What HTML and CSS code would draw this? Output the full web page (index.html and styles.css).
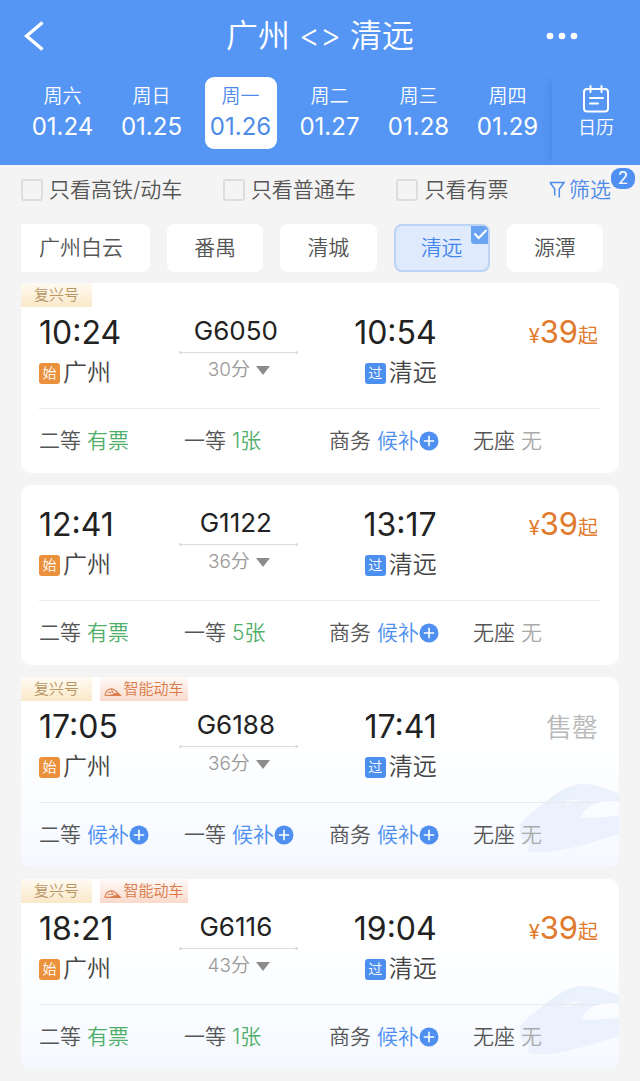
FILE: index.html
```html
<!DOCTYPE html>
<html lang="zh-CN">
<head>
<meta charset="utf-8">
<meta name="viewport" content="width=device-width, initial-scale=1">
<title>广州 - 清远</title>
<link rel="stylesheet" href="styles.css">
</head>
<body>
<svg class="defs" aria-hidden="true">
  <symbol id="plus" viewBox="0 0 20 20"><circle cx="10" cy="10" r="9.5" fill="#4e8ff0"/><path d="M10 4.8v10.4M4.8 10h10.4" stroke="#fff" stroke-width="1.6"/></symbol>
  <symbol id="train" viewBox="0 0 18 10"><path d="M1 8.300C1.500 4.500 4 2 7.500 1.800 10 1.800 13 5 16.500 8.300z" fill="none" stroke="currentColor" stroke-width="1.100"/><path d="M3.500 5.300h5.200L7.500 2M8.700 5.300l2.300 1.700" fill="none" stroke="currentColor" stroke-width=".9"/><path d="M4 8.300C8 8 10 6.500 13 5.800l4.300 3H1z" fill="currentColor"/></symbol>
  <symbol id="watermark" viewBox="0 0 102 70">
    <path d="M3 40C10 32 17 27 26 20 37 11 50 0 66 0c13 0 25 5 37 10v8c-8-1-13-1-20 0-9 2-16 9-20 15 13 2 27 0 40-2v19C88 54 68 61 53 64c-10 2-19 5-27 4-7 0-13 0-15-2l1-6C8 58 4 55 3 50z" fill="#ebf2fd"/>
    <path d="M49 18c5-2 9-3 13-2-4 3-8 4-13 5z" fill="#f6f9fe"/>
    <path d="M26 20C37 11 50 3 62 4c-8 3-13 9-21 14-5 2-10 3-15 2z" fill="#e5eefc" opacity=".5"/>
  </symbol>
</svg>
<header class="header">
  <div class="nav">
    <button class="nav-btn" aria-label="返回"><svg width="20" height="30" viewBox="0 0 20 30"><path d="M18.500 1.500 2.500 15l16 13.500" fill="none" stroke="#fff" stroke-width="3.400"/></svg></button>
    <h1 class="title">广州 &lt;&gt; 清远</h1>
    <button class="nav-btn nav-more" aria-label="更多"><svg width="32" height="8" viewBox="0 0 32 8" fill="#fff"><circle cx="4" cy="4" r="3.300"/><circle cx="16" cy="4" r="3.300"/><circle cx="28" cy="4" r="3.300"/></svg></button>
  </div>
  <div class="dates">
    <div class="days">
      <button class="day"><span>周六</span><b>01.24</b></button>
      <button class="day"><span>周日</span><b>01.25</b></button>
      <button class="day day-on" aria-pressed="true"><span>周一</span><b>01.26</b></button>
      <button class="day"><span>周二</span><b>01.27</b></button>
      <button class="day"><span>周三</span><b>01.28</b></button>
      <button class="day"><span>周四</span><b>01.29</b></button>
    </div>
    <button class="calendar"><svg width="28" height="28" viewBox="0 0 28 28" fill="none" stroke="#fff" stroke-width="2"><rect x="2" y="4" width="24" height="22.500" rx="3"/><path d="M8.500 1v6M19.500 1v6M8 13h13M8 18.500h8" stroke-linecap="round"/></svg><span>日历</span></button>
  </div>
</header>
<main>
  <form class="filters">
    <label class="check"><input type="checkbox">只看高铁/动车</label>
    <label class="check"><input type="checkbox">只看普通车</label>
    <label class="check"><input type="checkbox">只看有票</label>
    <button type="button" class="filter"><svg width="16" height="18" viewBox="0 0 16 18"><path d="M1 1.500h14L10.300 8v8.500M1 1.500 5.700 8v6.500" fill="none" stroke="currentColor" stroke-width="1.500"/></svg>筛选<span class="count">2</span></button>
  </form>
  <div class="chips">
    <button class="chip chip-edge">广州白云</button>
    <button class="chip">番禺</button>
    <button class="chip">清城</button>
    <button class="chip chip-on" aria-pressed="true">清远<svg class="tick" width="17" height="18" viewBox="0 0 17 18"><path d="M0 0h12q5 0 5 5v13H3q-3 0-3-3z" fill="#6ba3f3"/><path d="m3.500 7.500 4.200 4.500L15.500 4" fill="none" stroke="#fff" stroke-width="2"/></svg></button>
    <button class="chip">源潭</button>
  </div>
  <div class="list">
    <article class="card">
      <div class="tags"><span class="tag">复兴号</span></div>
      <div class="trip">
        <div class="stop"><time class="time">10:24</time><div class="station"><i class="mark mark-start">始</i>广州</div></div>
        <div class="mid"><div class="no">G6050</div><div class="rail"></div><button class="dur">30分<i class="caret"></i></button></div>
        <div class="stop stop-end"><time class="time">10:54</time><div class="station"><i class="mark">过</i>清远</div></div>
        <div class="price"><small>¥</small>39<em>起</em></div>
      </div>
      <ul class="seats">
        <li>二等<span class="yes">有票</span></li><li>一等<span class="yes">1张</span></li>
        <li>商务<a class="wait" href="#">候补<svg><use href="#plus"/></svg></a></li><li>无座<span class="none">无</span></li>
      </ul>
    </article>
    <article class="card card-plain">
      <div class="trip">
        <div class="stop"><time class="time">12:41</time><div class="station"><i class="mark mark-start">始</i>广州</div></div>
        <div class="mid"><div class="no">G1122</div><div class="rail"></div><button class="dur">36分<i class="caret"></i></button></div>
        <div class="stop stop-end"><time class="time">13:17</time><div class="station"><i class="mark">过</i>清远</div></div>
        <div class="price"><small>¥</small>39<em>起</em></div>
      </div>
      <ul class="seats">
        <li>二等<span class="yes">有票</span></li><li>一等<span class="yes">5张</span></li>
        <li>商务<a class="wait" href="#">候补<svg><use href="#plus"/></svg></a></li><li>无座<span class="none">无</span></li>
      </ul>
    </article>
    <article class="card card-smart">
      <svg class="watermark" aria-hidden="true"><use href="#watermark"/></svg>
      <div class="tags"><span class="tag">复兴号</span><span class="tag tag-smart"><svg><use href="#train"/></svg>智能动车</span></div>
      <div class="trip">
        <div class="stop"><time class="time">17:05</time><div class="station"><i class="mark mark-start">始</i>广州</div></div>
        <div class="mid"><div class="no">G6188</div><div class="rail"></div><button class="dur">36分<i class="caret"></i></button></div>
        <div class="stop stop-end"><time class="time">17:41</time><div class="station"><i class="mark">过</i>清远</div></div>
        <div class="price sold">售罄</div>
      </div>
      <ul class="seats">
        <li>二等<a class="wait" href="#">候补<svg><use href="#plus"/></svg></a></li><li>一等<a class="wait" href="#">候补<svg><use href="#plus"/></svg></a></li>
        <li>商务<a class="wait" href="#">候补<svg><use href="#plus"/></svg></a></li><li>无座<span class="none">无</span></li>
      </ul>
    </article>
    <article class="card card-smart">
      <svg class="watermark" aria-hidden="true"><use href="#watermark"/></svg>
      <div class="tags"><span class="tag">复兴号</span><span class="tag tag-smart"><svg><use href="#train"/></svg>智能动车</span></div>
      <div class="trip">
        <div class="stop"><time class="time">18:21</time><div class="station"><i class="mark mark-start">始</i>广州</div></div>
        <div class="mid"><div class="no">G6116</div><div class="rail"></div><button class="dur">43分<i class="caret"></i></button></div>
        <div class="stop stop-end"><time class="time">19:04</time><div class="station"><i class="mark">过</i>清远</div></div>
        <div class="price"><small>¥</small>39<em>起</em></div>
      </div>
      <ul class="seats">
        <li>二等<span class="yes">有票</span></li><li>一等<span class="yes">1张</span></li>
        <li>商务<a class="wait" href="#">候补<svg><use href="#plus"/></svg></a></li><li>无座<span class="none">无</span></li>
      </ul>
    </article>
  </div>
</main>
</body>
</html>
```
FILE: styles.css
```css
* { box-sizing: border-box; }
body { margin: 0; background: #f4f4f4; color: #555; font: 350 21px/30px Inter, "Noto Sans CJK SC", sans-serif; }
button { margin: 0; padding: 0; border: 0; background: none; color: inherit; font: inherit; cursor: pointer; }
a { text-decoration: none; }
i, em { font-style: normal; }
.defs { position: absolute; width: 0; height: 0; }

.header { background: #5596f5; color: #fff; }
.nav { display: flex; align-items: center; justify-content: space-between; height: 77px; padding: 0 62px 6px 24px; }
.nav-btn { display: flex; width: 32px; }
.nav-more { justify-content: flex-end; }
.title { flex: 1; margin: 0; padding-left: 38px; text-align: center; font-size: 32px; line-height: 44px; font-weight: 350; }
.dates { display: flex; }
.days { flex: 1; display: grid; grid-template-columns: repeat(6, 1fr); justify-items: center; padding: 0 0 16px 18px; }
.day { display: flex; flex-direction: column; align-items: center; justify-content: center; width: 72px; height: 72px; border-radius: 9px; }
.day span { font-size: 19px; line-height: 28px; }
.day b { font-size: 24px; line-height: 32px; font-weight: 400; }
.day-on { background: #fff; color: #4d8bea; }
.calendar { display: flex; flex-direction: column; align-items: center; width: 88px; padding-top: 8px; box-shadow: -6px 0 8px -4px rgba(40, 90, 180, .25); clip-path: inset(0 0 0 -16px); }
.calendar span { font-size: 18px; line-height: 29px; }

.filters { display: flex; align-items: center; justify-content: space-between; height: 50px; padding: 0 29px 0 21px; }
.check { display: flex; align-items: center; gap: 6px; }
.check input { appearance: none; width: 22px; height: 22px; margin: 0; border: 2px solid #ddd; border-radius: 3px; }
.filter { position: relative; display: flex; align-items: center; gap: 4px; color: #4d8bea; }
.count { position: absolute; left: 62px; top: -7px; width: 24px; border-radius: 9px; background: #5090f2; color: #fff; font-size: 17px; line-height: 21px; font-weight: 400; text-align: center; }

.chips { display: flex; gap: 17px; padding: 9px 37px 11px 21px; }
.chip { position: relative; flex: 1; height: 48px; border: 2px solid #fff; border-radius: 8px; background: #fff; }
.chip-edge { flex: 0 0 129px; padding-left: 16px; text-align: left; border-radius: 0 8px 8px 0; }
.chip-on { border-color: #bdd3f3; background: #dfebfc; color: #4285ed; }
.tick { position: absolute; right: 0; top: 0; }

.list { display: grid; gap: 12px; padding: 0 21px 12px; }
.card { position: relative; overflow: hidden; border-radius: 10px; background: #fff; }
.card:has(.tags) { border-top-left-radius: 3px; }
.card-plain { padding-top: 14px; }
.card-smart { background: linear-gradient(#fff, #fdfeff 45%, #f5f9ff); }
.watermark { position: absolute; right: 0; bottom: 13px; width: 102px; height: 70px; }
.tags { position: relative; display: flex; gap: 8px; }
.tag { display: flex; align-items: center; justify-content: center; width: 71px; height: 24px; background: linear-gradient(#fffaf2, #fae9c9); color: #b89562; font-size: 15px; }
.tag-smart { width: 88px; gap: 1px; background: linear-gradient(#fffaf8, #f9dacb); color: #d97a48; }
.tag-smart svg { width: 18px; height: 10px; margin-top: 6px; }
.trip { position: relative; display: grid; grid-template-columns: 140fr 119fr 138fr 163fr; margin: 0 19px 0 18px; padding: 4px 0 17px; border-bottom: 1px solid #e9eaec; }
.time { display: block; color: #222; font-size: 32px; line-height: 44px; font-weight: 400; }
.station { display: flex; align-items: center; gap: 3px; font-size: 24px; line-height: 36px; color: #444; }
.mark { width: 21px; height: 21px; border-radius: 3px; background: #4d8fee; color: #fff; font-size: 14px; line-height: 20px; text-align: center; }
.mark-start { background: #eb913c; }
.stop-end { text-align: right; }
.stop-end .station { justify-content: flex-end; }
.mid { text-align: center; }
.no { padding-right: 6px; color: #222; font-size: 26px; line-height: 40px; font-weight: 400; }
.rail { display: flex; align-items: center; justify-content: space-between; height: 3px; background: linear-gradient(#dcdcdc, #dcdcdc) center / 100% 1px no-repeat; }
.rail::before, .rail::after { content: ""; width: 3px; height: 3px; border-radius: 2px; background: #dcdcdc; }
.dur { display: inline-flex; align-items: center; gap: 6px; color: #999; font-size: 19px; line-height: 32px; }
.caret { border: 7px solid transparent; border-top: 9px solid #8c8c8c; border-bottom: 0; }
.price { display: flex; align-items: baseline; justify-content: flex-end; padding-right: 2px; color: #e17a2d; font-size: 31px; line-height: 42px; font-weight: 400; }
.price small, .price em { font-size: 20px; }
.sold { color: #b9b9b9; font-size: 26px; line-height: 46px; font-weight: 350; }
.seats { position: relative; display: grid; grid-template-columns: 145fr 145fr 144fr 127fr; margin: 0; padding: 0 19px 0 18px; list-style: none; line-height: 64px; }
.seats li { display: flex; gap: 6px; }
.yes { color: #4fae68; }
.none { color: #aaa; }
.wait { display: flex; align-items: center; color: #4d8ff0; }
.wait svg { width: 20px; height: 20px; }
```
